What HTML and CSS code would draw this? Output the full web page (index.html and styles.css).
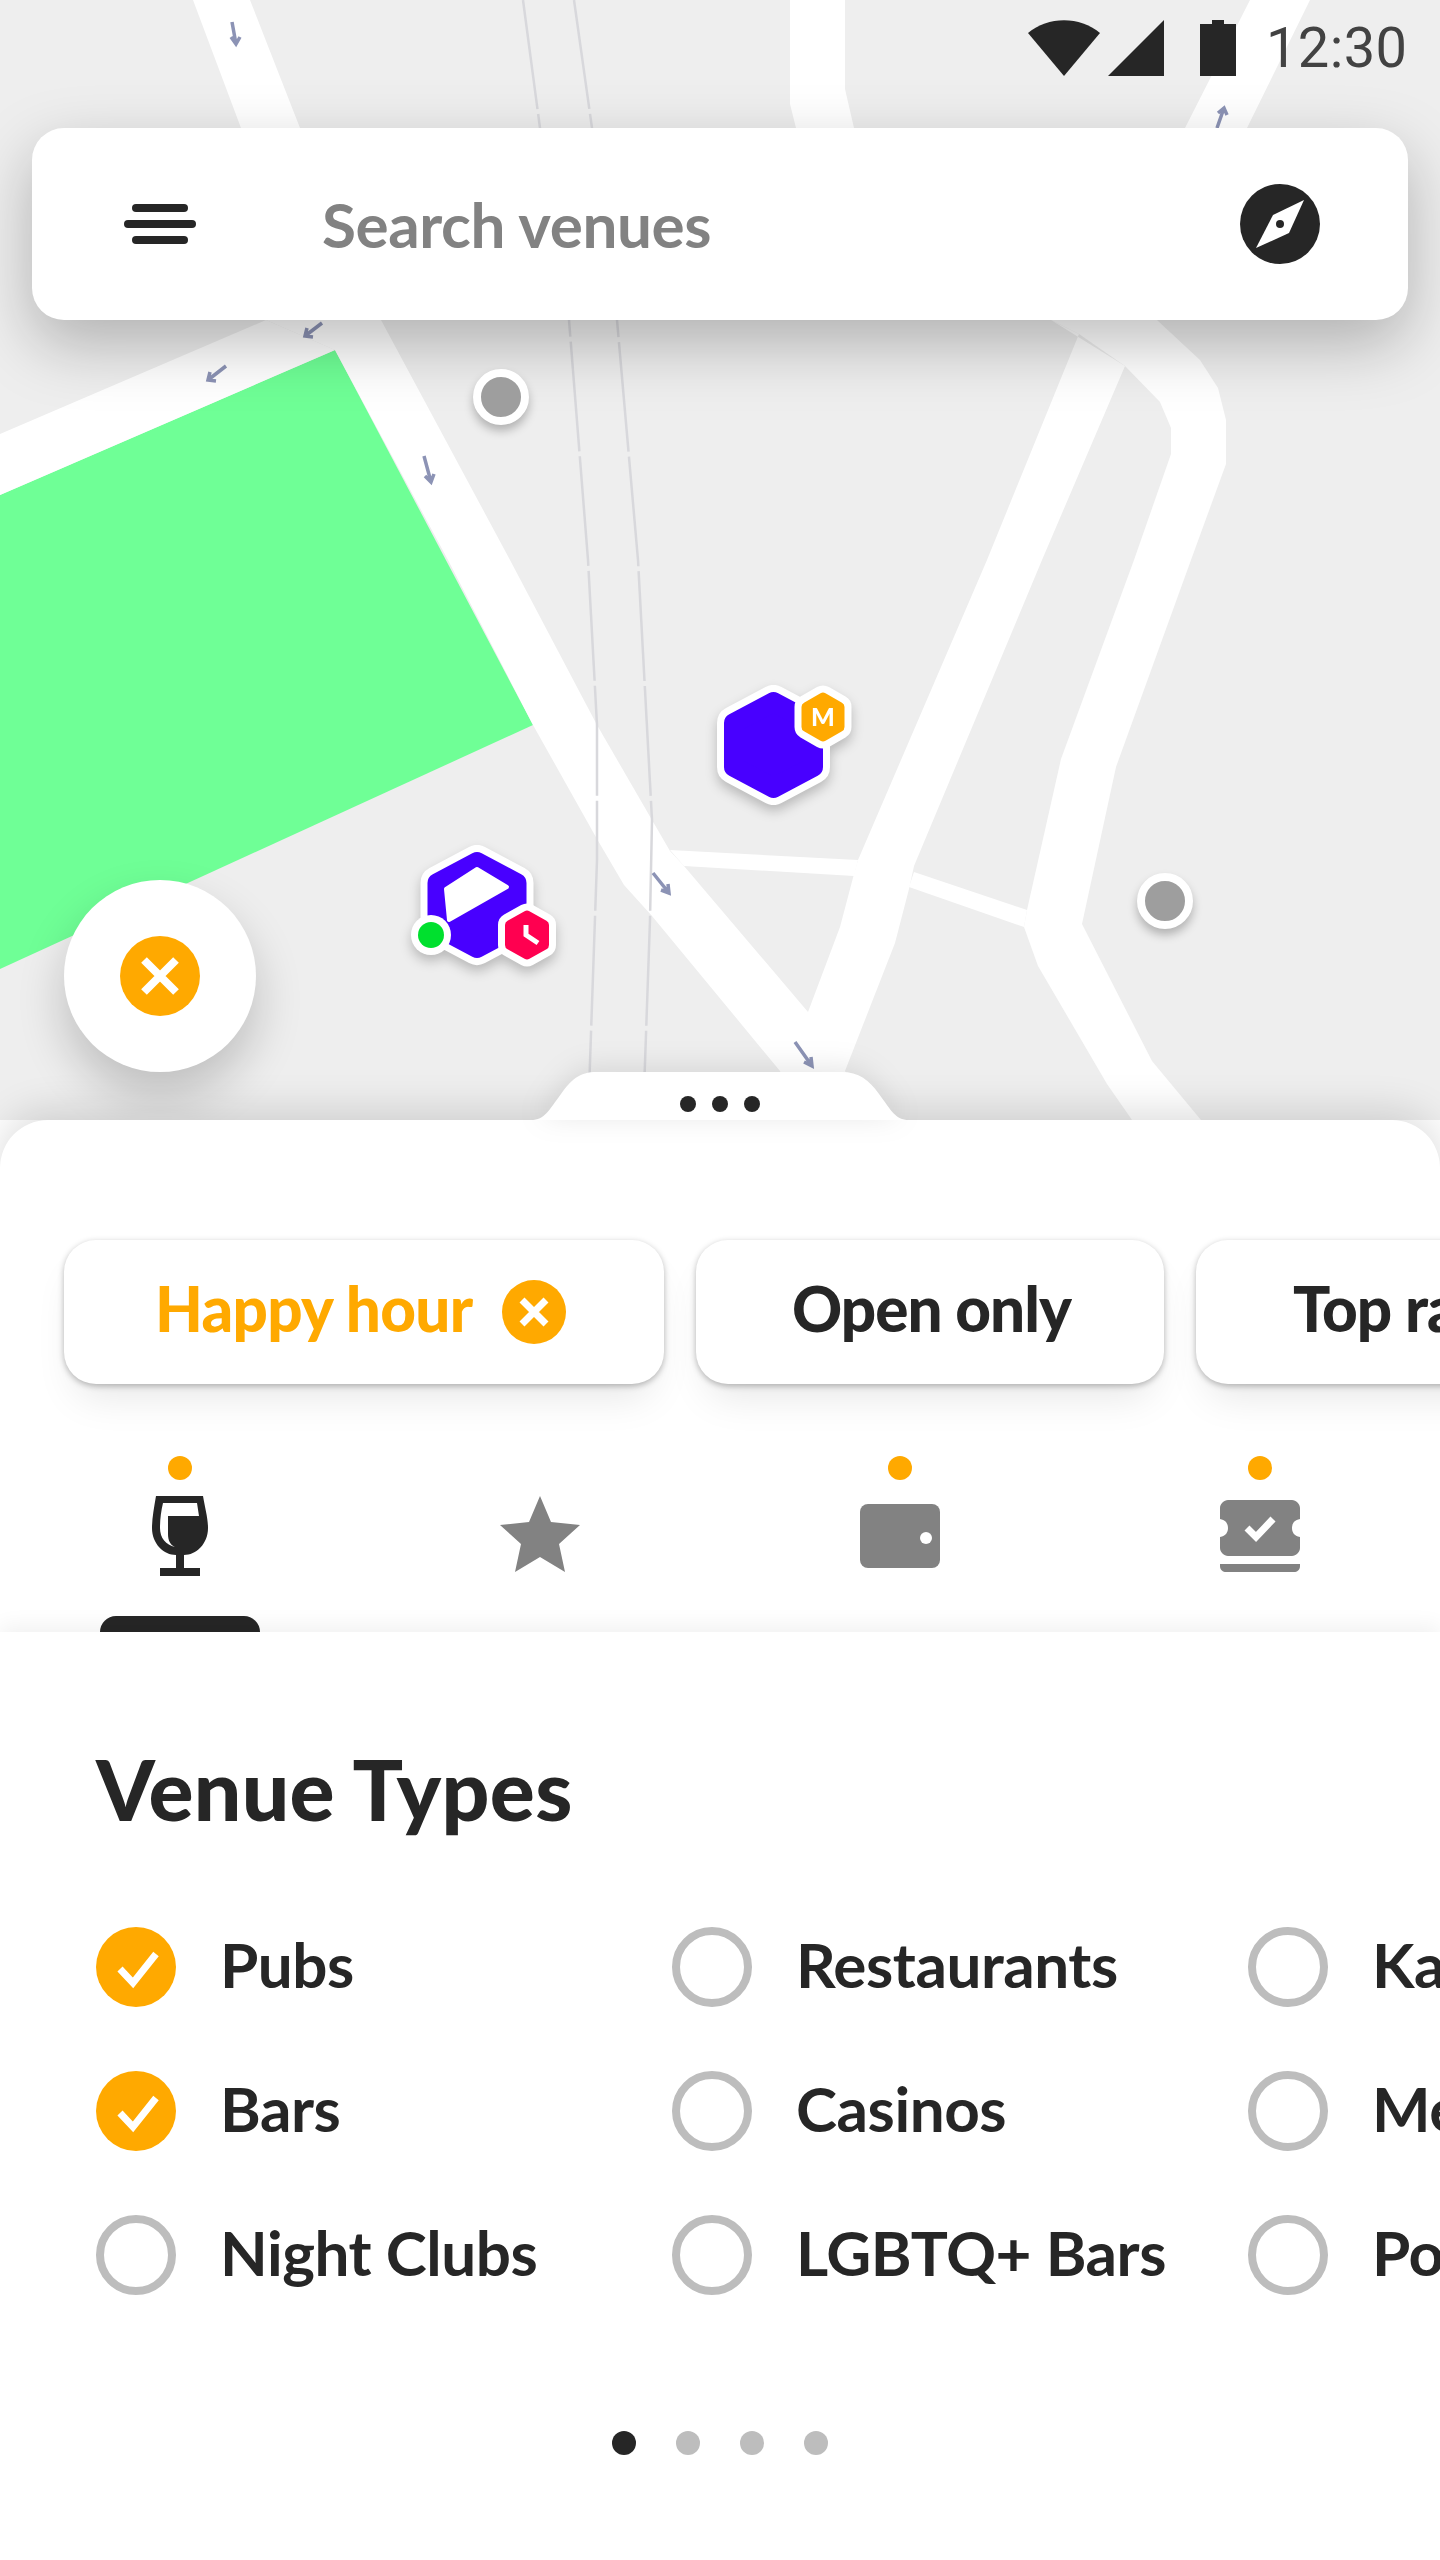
FILE: index.html
```html
<!DOCTYPE html>
<html lang="en">
<head>
<meta charset="utf-8">
<title>Venues</title>
<link rel="stylesheet" href="styles.css">
</head>
<body>
<div class="app">
  <section class="map">
    <svg class="map-art" viewBox="0 0 1440 1120" width="1440" height="1120">
      <polygon class="park" points="0,495 335,350 533,725 0,969"/>
      <g class="road">
        <polygon points="193,0 250,0 300,128 381,320 510,560 597,725 652,820 670,851 684,866 808,1012 845,1071 870,1120 800,1120 780,1071 652,916 624,885 597,839 533,725 448,560 335,350 266,320 241,128"/>
        <polygon points="0,434 266,320 335,350 0,495"/>
        <polygon points="987,560 1079,334 1051,320 1125,366 1042,560 914,866 909,889 895,943 845,1071 830,1120 790,1120 808,1012 840,927 854,874 858,860"/>
        <polygon points="1157,320 1200,360 1218,388 1226,420 1226,464 1191,560 1116,767 1082,924 1152,1061 1201,1120 1132,1120 1107,1084 1038,966 1024,927 1027,910 1061,759 1134,560 1171,454 1171,428 1160,402 1125,366 1079,334 1051,320 1040,300 1150,300"/>
        <polygon points="790,0 845,0 845,89 854,128 854,140 799,140 790,104"/>
        <polygon points="1250,0 1310,0 1247,128 1247,140 1185,140 1185,128"/>
        <polygon points="670,850 858,860 854,876 684,866"/>
        <polygon points="914,872 1027,910 1024,927 909,887"/>
      </g>
      <g class="rail">
        <polyline points="523,0 540,128 569,320 588,560 597,725 597,860 588,1120"/>
        <polyline points="574,0 592,128 617,320 638,560 652,820 650,920 643,1120"/>
      </g>
      <g class="arrow">
        <path d="M232 22 L236 44 M231 37 L236 44 L240 37"/>
        <path d="M322 323 L305 336 M313 337 L305 336 L307 328"/>
        <path d="M226 366 L208 380 M216 381 L208 380 L210 372"/>
        <path d="M424 456 L431 482 M425 476 L431 482 L434 474"/>
        <path d="M1217 128 L1224 108 M1218 113 L1224 108 L1227 115"/>
        <path d="M653 873 L669 893 M668 884 L669 893 L661 890"/>
        <path d="M795 1042 L812 1066 M811 1057 L812 1066 L804 1062"/>
      </g>
    </svg>

    <div class="status">
      <svg class="status-wifi" viewBox="0 0 72 56" width="72" height="56"><path d="M0 13 C20 -4 52 -4 72 13 L36 56Z"/></svg>
      <svg class="status-signal" viewBox="0 0 56 56" width="56" height="56"><polygon points="56,0 56,56 0,56"/></svg>
      <svg class="status-battery" viewBox="0 0 36 56" width="36" height="56"><path d="M12 0H24V4H36V56H0V4H12Z"/></svg>
      <span class="status-time">12:30</span>
    </div>

    <div class="search">
      <div class="burger"><span class="burger-short"></span><span class="burger-long"></span><span class="burger-short"></span></div>
      <span class="search-text">Search venues</span>
      <svg class="compass" viewBox="0 0 80 80" width="80" height="80">
        <circle class="ink" cx="40" cy="40" r="40"/>
        <path class="paper" d="M64 16 L49 49 L16 64 L33 31Z"/>
        <circle class="ink" cx="40" cy="40" r="4"/>
      </svg>
    </div>

    <span class="pin pin-a"></span>
    <span class="pin pin-b"></span>

    <svg class="marker marker-m" viewBox="0 0 150 130" width="150" height="130">
      <polygon class="hex-halo" points="57.5,22 97,43 97,87 57.5,108 18,87 18,43"/>
      <polygon class="hex-fill hex-violet" points="57.5,22 97,43 97,87 57.5,108 18,87 18,43"/>
      <polygon class="badge-halo" points="107,17.5 123.5,27 123.5,47 107,56.5 90.5,47 90.5,27"/>
      <polygon class="badge-fill hex-amber" points="107,17.5 123.5,27 123.5,47 107,56.5 90.5,47 90.5,27"/>
      <text class="hex-letter" x="107" y="46" text-anchor="middle">M</text>
    </svg>

    <svg class="marker marker-clock" viewBox="0 0 150 130" width="150" height="130">
      <polygon class="hex-halo" points="77,22 116.5,43 116.5,87 77,108 37.5,87 37.5,43"/>
      <polygon class="hex-fill hex-violet" points="77,22 116.5,43 116.5,87 77,108 37.5,87 37.5,43"/>
      <polygon class="hex-window" points="46,49 77,29 107,47 49,80"/>
      <circle class="hex-white" cx="31" cy="95" r="20"/>
      <circle class="dot-green" cx="31" cy="95" r="13"/>
      <polygon class="badge-halo" points="127,75.5 144,85 144,105 127,114.5 110,105 110,85"/>
      <polygon class="badge-fill hex-red" points="127,75.5 144,85 144,105 127,114.5 110,105 110,85"/>
      <path class="clock-hand" d="M126 85 V95 L138 103"/>
    </svg>

    <button class="fab" type="button">
      <svg viewBox="0 0 80 80" width="80" height="80">
        <circle class="amber" cx="40" cy="40" r="40"/>
        <path class="cross" d="M24 24 L56 56 M56 24 L24 56"/>
      </svg>
    </button>
  </section>

  <section class="sheet">
    <svg class="sheet-tab" viewBox="0 0 378 48" width="378" height="48">
      <path d="M0 48 C14 48 18 38 30 22 C40 8 48 0 66 0 H310 C328 0 338 8 348 22 C360 38 364 48 378 48Z"/>
    </svg>
    <div class="sheet-dots"><span></span><span></span><span></span></div>

    <div class="chips">
      <div class="chip chip-active">
        <span class="chip-label">Happy hour</span>
        <svg viewBox="0 0 64 64" width="64" height="64">
          <circle class="amber" cx="32" cy="32" r="32"/>
          <path class="cross cross-small" d="M20 20 L44 44 M44 20 L20 44"/>
        </svg>
      </div>
      <div class="chip chip-open"><span class="chip-label">Open only</span></div>
      <div class="chip chip-top"><span class="chip-label">Top rated</span></div>
    </div>

    <div class="tabs">
      <div class="tab">
        <span class="tab-dot"></span>
        <div class="tab-icon">
          <svg viewBox="0 0 56 80" width="56" height="80">
            <path class="ink" d="M4 0 H51 C53 12 56 22 56 32 C56 48 44 59 32 59 V72 H48 V80 H8 V72 H24 V59 C12 59 0 48 0 32 C0 22 2 12 4 0Z"/>
            <path class="paper" d="M11 7 H45 L47 20 H16 V38 C16 44 18 49 23 51 C14 49 8 42 8 32 C8 24 9 15 11 7Z"/>
          </svg>
        </div>
        <span class="tab-bar"></span>
      </div>
      <div class="tab">
        <span class="tab-dot tab-dot-off"></span>
        <div class="tab-icon tab-icon-star">
          <svg viewBox="0 0 80 76" width="80" height="76">
            <polygon class="mute" points="40,0 51,26 80,29 59,48 65,76 40,61 15,76 21,48 0,29 29,26"/>
          </svg>
        </div>
      </div>
      <div class="tab">
        <span class="tab-dot"></span>
        <div class="tab-icon">
          <svg viewBox="0 0 80 64" width="80" height="64">
            <rect class="mute" width="80" height="64" rx="8"/>
            <circle class="paper" cx="66" cy="34" r="6"/>
          </svg>
        </div>
      </div>
      <div class="tab">
        <span class="tab-dot"></span>
        <div class="tab-icon">
          <svg viewBox="0 0 80 72" width="80" height="72">
            <path class="mute" d="M8 0 H72 C76 0 80 4 80 8 V19 C74 20 72 24 72 28 C72 32 74 36 80 37 V48 C80 52 76 56 72 56 H8 C4 56 0 52 0 48 V37 C6 36 8 32 8 28 C8 24 6 20 0 19 V8 C0 4 4 0 8 0Z"/>
            <path class="tick" d="M27 28 L36 37 L53 19"/>
            <path class="mute" d="M0 64 H80 V66 C80 70 77 72 74 72 H6 C3 72 0 70 0 66Z"/>
          </svg>
        </div>
      </div>
    </div>

    <div class="filters">
      <h2 class="filters-title">Venue Types</h2>
      <ul class="options">
        <li class="option"><span class="check check-on"><svg viewBox="0 0 80 80" width="80" height="80"><path class="tick" d="M24 42 L37 56 L60 27"/></svg></span><span class="option-label">Pubs</span></li>
        <li class="option"><span class="check"></span><span class="option-label">Restaurants</span></li>
        <li class="option"><span class="check"></span><span class="option-label">Karaoke</span></li>
        <li class="option"><span class="check check-on"><svg viewBox="0 0 80 80" width="80" height="80"><path class="tick" d="M24 42 L37 56 L60 27"/></svg></span><span class="option-label">Bars</span></li>
        <li class="option"><span class="check"></span><span class="option-label">Casinos</span></li>
        <li class="option"><span class="check"></span><span class="option-label">Members Clubs</span></li>
        <li class="option"><span class="check"></span><span class="option-label">Night Clubs</span></li>
        <li class="option"><span class="check"></span><span class="option-label">LGBTQ+ Bars</span></li>
        <li class="option"><span class="check"></span><span class="option-label">Pool Halls</span></li>
      </ul>
      <div class="pager"><span class="pager-dot pager-dot-on"></span><span class="pager-dot"></span><span class="pager-dot"></span><span class="pager-dot"></span></div>
    </div>
  </section>
</div>
</body>
</html>
```
FILE: styles.css
```css
* { box-sizing: border-box; }
html, body { margin: 0; padding: 0; background: #fff; }
body { font-family: "Lato", "Open Sans", sans-serif; color: #262626; }
svg { display: block; }

.ink { fill: #262626; }
.paper { fill: #fff; }
.mute { fill: #828282; }
.amber { fill: #ffa900; }
.cross { stroke: #fff; stroke-width: 8; fill: none; }
.cross-small { stroke-width: 7; }
.tick { stroke: #fff; stroke-width: 7; fill: none; }

.app { position: relative; width: 1440px; height: 2560px; overflow: hidden; background: #fff; }

.map { position: relative; height: 1120px; background: #eeeeee; overflow: hidden; }
.map-art { position: absolute; left: 0; top: 0; }
.park { fill: #6fff96; }
.road polygon { fill: #fff; }
.rail polyline { fill: none; stroke: #d8d8dc; stroke-width: 2.5; stroke-dasharray: 110 5; }
.arrow path { fill: none; stroke: #8c93b5; stroke-width: 3.5; }

.status { position: relative; display: flex; align-items: center; height: 96px; padding-left: 1028px; }
.status svg { fill: #262626; }
.status-signal { margin-left: 8px; }
.status-battery { margin-left: 36px; }
.status-time { margin-left: 30px; font-family: "Roboto", sans-serif; font-size: 56px; letter-spacing: .4px; line-height: 1; color: #424242; }

.search { position: relative; display: flex; align-items: center; height: 192px; margin: 32px 32px 0; padding: 0 88px 0 92px; background: #fff; border-radius: 32px; box-shadow: 0 24px 64px rgba(0, 0, 0, .26); }
.burger { display: flex; flex-direction: column; align-items: center; gap: 8px; width: 72px; }
.burger span { display: block; height: 8px; background: #262626; border-radius: 4px; }
.burger-short { width: 56px; }
.burger-long { width: 72px; }
.search-text { flex: 1; margin-left: 126px; font-size: 62px; font-weight: 700; letter-spacing: -.4px; line-height: 1; color: #828282; }

.pin { position: absolute; width: 56px; height: 56px; border-radius: 50%; background: #9e9e9e; border: 8px solid #fff; box-shadow: 0 6px 10px rgba(0, 0, 0, .25); }
.pin-a { left: 473px; top: 369px; }
.pin-b { left: 1137px; top: 873px; }

.marker { position: absolute; overflow: visible; filter: drop-shadow(0 6px 6px rgba(0, 0, 0, .22)); }
.marker-m { left: 716px; top: 680px; }
.marker-clock { left: 400px; top: 840px; }
.hex-halo { fill: #fff; stroke: #fff; stroke-width: 34; stroke-linejoin: round; }
.hex-fill { stroke-width: 20; stroke-linejoin: round; }
.hex-violet { fill: #4800ff; stroke: #4800ff; }
.hex-window { fill: #fff; stroke: #fff; stroke-width: 4; stroke-linejoin: round; }
.hex-white { fill: #fff; }
.badge-halo { fill: #fff; stroke: #fff; stroke-width: 24; stroke-linejoin: round; }
.badge-fill { stroke-width: 10; stroke-linejoin: round; }
.hex-amber { fill: #ffa900; stroke: #ffa900; }
.hex-red { fill: #ff0050; stroke: #ff0050; }
.dot-green { fill: #00e02e; }
.hex-letter { fill: #fff; font-family: "Lato", sans-serif; font-weight: 900; font-size: 25px; }
.clock-hand { fill: none; stroke: #fff; stroke-width: 5; }

.fab { position: absolute; left: 64px; top: 880px; display: flex; align-items: center; justify-content: center; width: 192px; height: 192px; padding: 0; border: 0; border-radius: 50%; background: #fff; box-shadow: 0 24px 48px rgba(0, 0, 0, .2); }

.sheet { position: relative; height: 1440px; background: #fff; border-radius: 48px 48px 0 0; box-shadow: 0 -8px 40px rgba(0, 0, 0, .14); }
.sheet-tab { position: absolute; left: 531px; top: -48px; fill: #fff; filter: drop-shadow(0 -4px 14px rgba(0, 0, 0, .1)); }
.sheet-dots { position: absolute; left: 680px; top: -24px; display: flex; gap: 16px; }
.sheet-dots span { width: 16px; height: 16px; border-radius: 50%; background: #262626; }

.chips { display: flex; gap: 32px; padding: 120px 0 0 64px; }
.chip { position: relative; display: flex; flex-shrink: 0; align-items: center; height: 144px; background: #fff; border-radius: 32px; font-size: 62px; font-weight: 900; letter-spacing: -1px; white-space: nowrap; box-shadow: 0 2px 6px rgba(0, 0, 0, .28), 0 24px 40px -12px rgba(0, 0, 0, .1); }
.chip-label { margin-bottom: 8px; }
.chip-active { width: 600px; padding-left: 91px; color: #ffa900; gap: 30px; letter-spacing: -.7px; }
.chip-open { width: 468px; padding-left: 96px; }
.chip-top { width: 400px; padding-left: 97px; }

.tabs { display: grid; grid-template-columns: repeat(4, 360px); height: 248px; padding-top: 72px; }
.tab { display: flex; flex-direction: column; align-items: center; }
.tab-dot { width: 24px; height: 24px; border-radius: 50%; background: #ffa900; }
.tab-dot-off { visibility: hidden; }
.tab-icon { display: flex; align-items: center; justify-content: center; height: 80px; margin-top: 16px; }
.tab-icon-star { padding-bottom: 4px; }
.tab-bar { width: 160px; height: 16px; margin-top: 40px; background: #262626; border-radius: 16px 16px 0 0; }

.filters { position: relative; height: 928px; padding: 101px 0 0 96px; background: #fff; box-shadow: 0 -6px 20px rgba(0, 0, 0, .06); }
.filters-title { margin: 0; font-size: 84px; font-weight: 900; letter-spacing: .3px; line-height: 112px; }
.options { display: grid; grid-template-columns: repeat(3, 576px); grid-auto-rows: 144px; margin: 50px 0 0; padding: 0; list-style: none; }
.option { display: flex; align-items: center; gap: 44px; font-size: 62px; font-weight: 700; letter-spacing: -.45px; white-space: nowrap; }
.option-label { margin-bottom: 6px; }
.check { flex-shrink: 0; width: 80px; height: 80px; border-radius: 50%; border: 8px solid #bdbdbd; }
.check-on { border: 0; background: #ffa900; }

.pager { display: flex; justify-content: center; gap: 40px; margin-top: 104px; padding-right: 96px; }
.pager-dot { width: 24px; height: 24px; border-radius: 50%; background: #bdbdbd; }
.pager-dot-on { background: #262626; }
```
